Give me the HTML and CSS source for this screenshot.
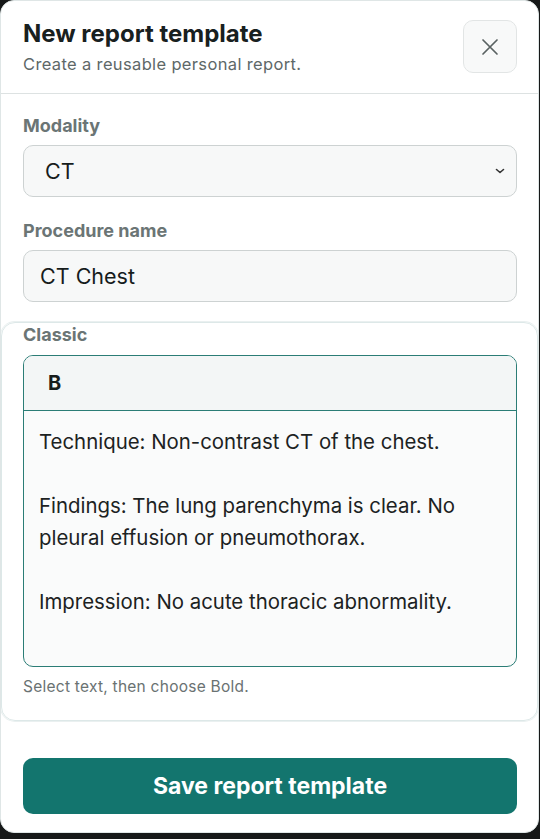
FILE: index.html
```html
<!DOCTYPE html>
<html lang="en">
<head>
<meta charset="utf-8">
<title>New report template</title>
<link rel="stylesheet" href="styles.css">
</head>
<body>
<div class="modal">
  <header class="modal-header">
    <div class="titles">
      <h1 class="title">New report template</h1>
      <p class="subtitle">Create a reusable personal report.</p>
    </div>
    <button class="close-btn" type="button" aria-label="Close">
      <svg width="18" height="18" viewBox="0 0 18 18" fill="none" stroke="#5a6262" stroke-width="1.7" stroke-linecap="round"><path d="M2 2L16 16M16 2L2 16"/></svg>
    </button>
  </header>
  <div class="modal-body">
    <div class="field">
      <label class="label">Modality</label>
      <div class="select">
        <span class="select-value">CT</span>
        <svg class="chevron" width="12" height="8" viewBox="0 0 12 8" fill="none" stroke="#333" stroke-width="1.6" stroke-linecap="round" stroke-linejoin="round"><path d="M2.5 2.5L6 5.5L9.5 2.5"/></svg>
      </div>
    </div>
    <div class="field field-gap">
      <label class="label">Procedure name</label>
      <div class="input">CT Chest</div>
    </div>
    <section class="card">
      <label class="label">Classic</label>
      <div class="editor">
        <div class="toolbar"><span class="bold-btn">B</span></div>
        <div class="content">
          <p>Technique: Non-contrast CT of the chest.</p>
          <p>Findings: The lung parenchyma is clear. No pleural effusion or pneumothorax.</p>
          <p>Impression: No acute thoracic abnormality.</p>
        </div>
      </div>
      <p class="hint">Select text, then choose Bold.</p>
    </section>
  </div>
  <footer class="modal-footer">
    <button class="save-btn" type="button">Save report template</button>
  </footer>
</div>
</body>
</html>
```
FILE: styles.css
```css
* { box-sizing: border-box; }
html, body { margin: 0; padding: 0; }
body {
  background: #161818;
  font-family: Inter, "Noto Sans", "Liberation Sans", sans-serif;
  width: 540px;
  height: 839px;
  overflow: hidden;
}
.modal {
  width: 539px;
  height: 833px;
  background: #fff;
  border: 1px solid #dfe6e6;
  border-radius: 14px;
  display: flex;
  flex-direction: column;
  overflow: hidden;
}
.modal-header {
  display: flex;
  justify-content: space-between;
  align-items: flex-start;
  padding: 19px 21px 18px 22px;
  border-bottom: 1px solid #dde2e2;
}
.title {
  margin: 0;
  font-size: 24px;
  line-height: 28px;
  font-weight: 700;
  color: #182020;
  letter-spacing: 0;
}
.subtitle {
  margin: 5px 0 0;
  font-size: 16.5px;
  line-height: 22px;
  color: #5e6868;
  letter-spacing: 0.35px;
}
.close-btn {
  width: 54px;
  height: 53px;
  border: 1px solid #e2e5e5;
  background: #f8f9f9;
  border-radius: 10px;
  display: flex;
  align-items: center;
  justify-content: center;
  padding: 0;
}
.modal-body {
  padding-top: 21px;
  display: flex;
  flex-direction: column;
}
.field {
  padding: 0 21px 0 22px;
  display: flex;
  flex-direction: column;
}
.field-gap { margin-top: 23px; }
.label {
  font-size: 18px;
  line-height: 22px;
  font-weight: 700;
  color: #6b7575;
  margin-bottom: 8px;
}
.select, .input {
  height: 52px;
  border: 1px solid #cdd2d2;
  border-radius: 10px;
  background: #f7f8f8;
  font-size: 21.5px;
  color: #161c1c;
  display: flex;
  align-items: center;
}
.select {
  justify-content: space-between;
  padding: 0 10px 0 21px;
}
.input { padding: 0 16px; }
.card {
  margin-top: 20px;
  border: 1px solid #dde8e8;
  border-radius: 14px;
  box-shadow: 0 0 0 1px #eaf0f0;
  padding: 1px 20px 23px 21px;
  display: flex;
  flex-direction: column;
}
.card .label { margin-bottom: 9px; }
.editor {
  border: 1.5px solid #2b7d76;
  border-radius: 10px;
  overflow: hidden;
  background: #fafbfb;
}
.toolbar {
  height: 55px;
  background: #f3f6f6;
  border-bottom: 1.5px solid #2b7d76;
  display: flex;
  align-items: center;
  padding-left: 24px;
}
.bold-btn {
  font-size: 20px;
  font-weight: 700;
  color: #161c1c;
}
.content {
  min-height: 255px;
  padding: 15px 14px 0 15px;
  font-size: 20.4px;
  line-height: 32px;
  color: #1c2222;
}
.content p { margin: 0 0 32px; }
.content p:last-child { margin-bottom: 0; }
.hint {
  margin: 10px 0 0;
  font-size: 15.5px;
  line-height: 20px;
  color: #6a7272;
  letter-spacing: 0.25px;
}
.modal-footer {
  margin-top: auto;
  padding: 0 21px 18px 22px;
}
.save-btn {
  width: 100%;
  height: 56px;
  border: none;
  border-radius: 10px;
  background: #13756e;
  color: #fff;
  font-family: inherit;
  font-size: 23px;
  font-weight: 700;
}
```
